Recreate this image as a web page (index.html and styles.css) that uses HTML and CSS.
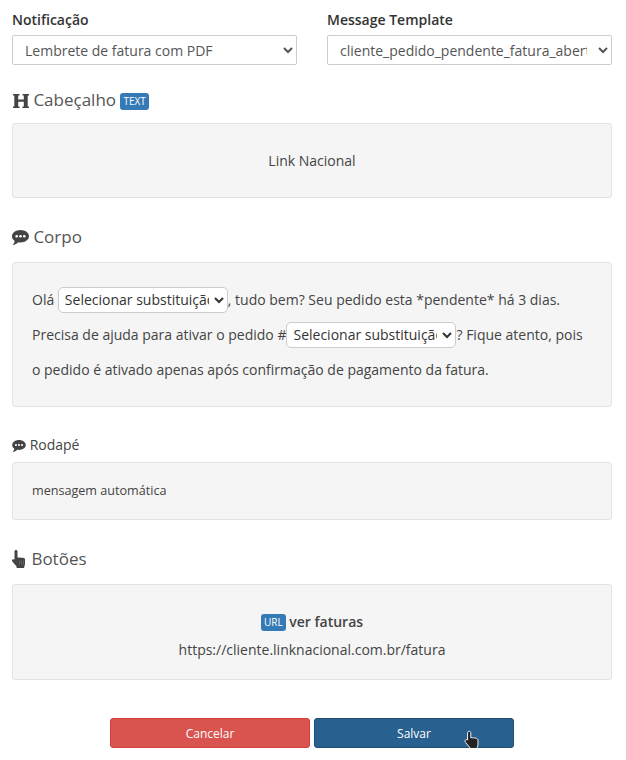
FILE: index.html
```html
<!DOCTYPE html>
<html lang="pt-BR">

<head>
    <meta charset="utf-8">
    <meta name="viewport" content="width=device-width, initial-scale=1.0">
    <title>Notificação</title>
    <link rel="stylesheet" href="styles.css">
</head>

<body>
    <main class="pagina">
        <section class="topo">
            <div class="campo">
                <label for="notificacao">Notificação</label>
                <select id="notificacao" class="controle">
                    <option>Lembrete de fatura com PDF</option>
                </select>
            </div>
            <div class="campo">
                <label for="template">Message Template</label>
                <select id="template" class="controle">
                    <option>cliente_pedido_pendente_fatura_aberta</option>
                </select>
            </div>
        </section>

        <h2 class="titulo titulo-cabecalho">
            <svg class="icone" viewBox="0 0 16 14" width="16" height="14">
                <path d="M0 0h6.500v1.600H5.200v3.900h5.600V1.600H9.500V0H16v1.600h-1.300v10.800H16V14H9.500v-1.600h1.300V7.800H5.200v4.600h1.300V14H0v-1.600h1.300V1.600H0z" />
            </svg>
            Cabeçalho <span class="etiqueta">TEXT</span>
        </h2>
        <div class="caixa caixa-cabecalho">Link Nacional</div>

        <h2 class="titulo titulo-corpo">
            <svg class="icone" viewBox="0 0 17 15" width="17" height="15">
                <path d="M8.500 0C13.200 0 17 2.800 17 6.200s-3.800 6.200-8.500 6.200c-.8 0-1.500-.1-2.200-.2C5 13.600 3 14.700.5 15c1-1 2-2.300 2.200-4C1 9.900 0 8.100 0 6.200 0 2.800 3.800 0 8.500 0z" />
                <g class="pontos">
                    <circle cx="4.700" cy="6.300" r="1.300" />
                    <circle cx="8.500" cy="6.300" r="1.300" />
                    <circle cx="12.300" cy="6.300" r="1.300" />
                </g>
            </svg>
            Corpo
        </h2>
        <div class="caixa caixa-corpo">
            <p>Olá <select class="substituicao"><option>Selecionar substituição</option></select>, tudo bem? Seu pedido esta *pendente* há 3 dias.</p>
            <p>Precisa de ajuda para ativar o pedido #<select class="substituicao"><option>Selecionar substituição</option></select>? Fique atento, pois</p>
            <p>o pedido é ativado apenas após confirmação de pagamento da fatura.</p>
        </div>

        <h3 class="subtitulo">
            <svg class="icone" viewBox="0 0 17 15" width="14" height="12">
                <path d="M8.500 0C13.200 0 17 2.800 17 6.200s-3.800 6.200-8.500 6.200c-.8 0-1.500-.1-2.200-.2C5 13.600 3 14.700.5 15c1-1 2-2.300 2.200-4C1 9.900 0 8.100 0 6.200 0 2.800 3.800 0 8.500 0z" />
                <g class="pontos">
                    <circle cx="4.700" cy="6.300" r="1.300" />
                    <circle cx="8.500" cy="6.300" r="1.300" />
                    <circle cx="12.300" cy="6.300" r="1.300" />
                </g>
            </svg>
            Rodapé
        </h3>
        <div class="caixa caixa-rodape">mensagem automática</div>

        <h2 class="titulo titulo-botoes">
            <svg class="icone icone-mao" viewBox="0 0 15 18" width="15" height="18">
                <path d="M4 0c.9 0 1.500.7 1.500 1.600v6c.7-.3 1.400-.3 2 .1.700-.3 1.500-.2 2 .2.700-.3 1.500-.2 2 .2.900 0 1.500.7 1.500 1.700v3.700c0 1.200-.3 2.300-.8 3.200V18H4.600v-1.600L.5 11.800c-.7-.8-.7-1.700-.1-2.300.7-.6 1.600-.4 2.100.1V1.600C2.500.7 3.100 0 4 0z" />
                <g class="linhas">
                    <path d="M7.500 10.500v4M9.500 10.500v4M11.500 10.500v4" />
                </g>
            </svg>
            Botões
        </h2>
        <div class="caixa caixa-botoes">
            <div class="botao-nome"><span class="etiqueta">URL</span> <b>ver faturas</b></div>
            <div>https://cliente.linknacional.com.br/fatura</div>
        </div>

        <div class="acoes">
            <button class="btn btn-cancelar">Cancelar</button>
            <button class="btn btn-salvar">Salvar</button>
            <svg class="cursor" viewBox="0 0 18 22" width="17" height="21">
                <path d="M5.500 1.200c1 0 1.700.8 1.700 1.800v5.200c.6-.3 1.300-.3 1.800 0 .6-.3 1.400-.2 1.900.2.700-.3 1.500-.1 2 .3.900.1 1.900.8 1.900 2.100v4.200c0 1.600-.4 2.700-1 3.700v2H6.600v-1.700L1.600 13c-.8-.9-.7-2 0-2.600s1.700-.4 2.200.1V3c0-1 .7-1.800 1.700-1.800z" />
            </svg>
        </div>
    </main>
</body>

</html>
```

FILE: styles.css
```css
*,
body * {
    box-sizing: border-box;
}

body {
    margin: 0;
    padding: 0;
    background-color: #fff;
    color: #444;
    font-family: "Open Sans", "Liberation Sans", sans-serif;
    font-size: 14px;
    line-height: 20px;
}

.pagina {
    padding: 10px 14px 0 12px;
}

.topo {
    display: grid;
    grid-template-columns: 285px 285px;
    column-gap: 30px;
}

.campo label {
    display: block;
    margin-bottom: 5px;
    color: #333;
    font-weight: 600;
}

.controle {
    width: 100%;
    height: 30px;
    padding: 0 8px;
    border: 1px solid #ccc;
    border-radius: 2px;
    background-color: #fff;
    color: #555;
    font-family: inherit;
    font-size: 14px;
}

.titulo {
    margin: 0 0 14px;
    color: #555;
    font-size: 17px;
    font-weight: 400;
    line-height: 22px;
}

.titulo-cabecalho {
    margin-top: 24px;
    margin-bottom: 12px;
}

.titulo-cabecalho .icone {
    margin-left: 1px;
}

.titulo-corpo {
    margin-top: 28px;
}

.titulo-botoes {
    margin-top: 28px;
}

.subtitulo {
    margin: 28px 0 7px;
    color: #444;
    font-size: 14px;
    font-weight: 400;
    line-height: 20px;
}

.icone {
    vertical-align: -2px;
    fill: #444;
}

.icone-mao {
    vertical-align: -3px;
}

.pontos {
    fill: #fff;
}

.linhas {
    fill: none;
    stroke: #777;
    stroke-width: .6;
}

.etiqueta {
    display: inline-block;
    padding: 0 3px;
    border-radius: 3px;
    background-color: #337ab7;
    color: #fff;
    font-size: 10px;
    line-height: 17px;
    vertical-align: 1px;
}

.caixa {
    border: 1px solid #e3e3e3;
    border-radius: 3px;
    background-color: #f5f5f5;
    padding: 19px;
    width: 600px;
}

.caixa-cabecalho {
    height: 75px;
    padding: 27px 19px;
    text-align: center;
}

.caixa-corpo {
    padding: 19px 19px 19px;
}

.caixa-corpo p {
    margin: 0;
    line-height: 35px;
}

.substituicao {
    width: 170px;
    height: 26px;
    padding: 0 2px;
    border: 1px solid #ccc;
    border-radius: 5px;
    background-color: #fff;
    color: #333;
    font-family: inherit;
    font-size: 14px;
}

.caixa-rodape {
    padding: 18px 19px;
    font-size: 12.6px;
}

.caixa-botoes {
    padding: 27px 19px 19px;
    text-align: center;
}

.botao-nome {
    margin-bottom: 8px;
}

.botao-nome b {
    font-weight: 600;
}

.acoes {
    position: relative;
    display: flex;
    justify-content: center;
    gap: 4px;
    margin-top: 38px;
}

.btn {
    width: 200px;
    height: 30px;
    border: 1px solid transparent;
    border-radius: 3px;
    color: #fff;
    font-family: inherit;
    font-size: 12px;
}

.btn-cancelar {
    background-color: #d9534f;
    border-color: #d43f3a;
}

.btn-salvar {
    background-color: #286090;
    border-color: #204d74;
}

.cursor {
    position: absolute;
    left: 452px;
    top: 12px;
    fill: #222;
    stroke: #fff;
    stroke-width: 1;
}
```
